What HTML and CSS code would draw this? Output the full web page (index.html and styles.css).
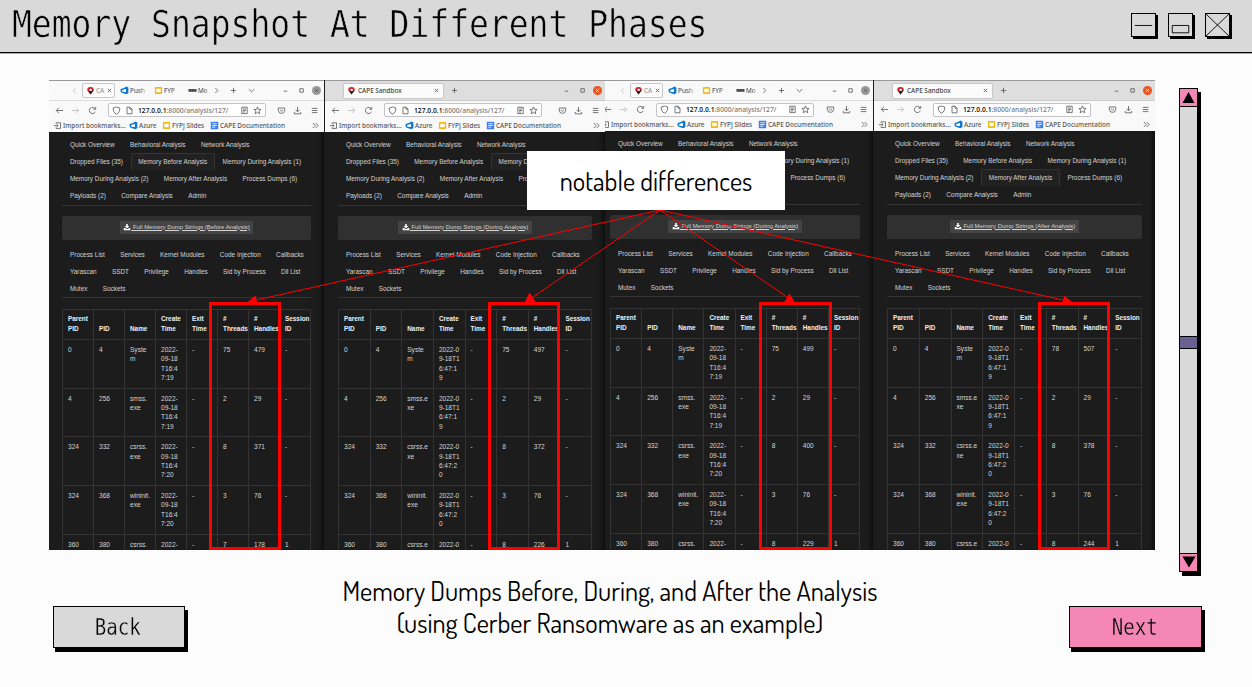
FILE: index.html
```html
<!DOCTYPE html>
<html lang="en">
<head>
<meta charset="utf-8">
<title>Memory Snapshot At Different Phases</title>
<link rel="stylesheet" href="styles.css">
</head>
<body>
<svg class="defs" aria-hidden="true">
  <symbol id="back" viewBox="0 0 9 9"><path d="M8 4.5H1.3M4 1.8L1.3 4.5L4 7.2"/></symbol>
  <symbol id="forward" viewBox="0 0 9 9"><path d="M1 4.5h6.7M5 1.8l2.7 2.7L5 7.2"/></symbol>
  <symbol id="reload" viewBox="0 0 9 9"><path d="M7.3 5.7A3.1 3.1 0 1 1 7 2.7M7.7 1v2.3H5.4"/></symbol>
  <symbol id="shield" viewBox="0 0 9 9"><path d="M4.5 1L7.8 2C7.8 5 7 7 4.5 8.2C2 7 1.2 5 1.2 2Z"/></symbol>
  <symbol id="page" viewBox="0 0 9 9"><path d="M2 1.2h3L7 3.2v4.6H2ZM5 1.2v2h2"/></symbol>
  <symbol id="reader" viewBox="0 0 9 9"><path d="M1.8 1.2h5.4v6.4H1.8ZM3 3h3M3 4.5h3M3 6h2"/></symbol>
  <symbol id="star" viewBox="0 0 9 9"><path d="M4.5 .9l1 2.4 2.6.2-2 1.7.7 2.6-2.3-1.4-2.3 1.4.7-2.6-2-1.7 2.6-.2Z"/></symbol>
  <symbol id="pocket" viewBox="0 0 9 9"><path d="M1.3 2h6.4v2.2a3.2 3.2 0 0 1-6.4 0ZM3 3.8l1.5 1.4L6 3.8"/></symbol>
  <symbol id="download" viewBox="0 0 9 9"><path d="M4.5 1v4.6M2.5 3.8l2 2 2-2M1.3 6v1.8h6.4V6"/></symbol>
  <symbol id="menu" viewBox="0 0 9 9"><path d="M1.8 2.4h5.6M1.8 4.5h5.6M1.8 6.6h5.6"/></symbol>
  <symbol id="left" viewBox="0 0 9 9"><path d="M5.8 2L3.2 4.5L5.8 7"/></symbol>
  <symbol id="right" viewBox="0 0 9 9"><path d="M3.3 2l2.5 2.5L3.3 7"/></symbol>
  <symbol id="down" viewBox="0 0 9 9"><path d="M1.8 3.2L4.5 5.8l2.7-2.6"/></symbol>
  <symbol id="plus" viewBox="0 0 9 9"><path d="M4.5 1.9v5.2M1.9 4.5h5.2"/></symbol>
  <symbol id="close" viewBox="0 0 9 9"><path d="M2.8 2.8l3.4 3.4M6.2 2.8L2.8 6.2"/></symbol>
  <symbol id="minimize" viewBox="0 0 9 9"><path d="M2.8 5.2h3.4"/></symbol>
  <symbol id="maximize" viewBox="0 0 9 9"><path d="M2.8 2.7h3.5v3.5H2.8Z"/></symbol>
  <symbol id="import" viewBox="0 0 9 9"><path d="M3 2.8V1.8h4.5v5.6H3v-1M.8 4.6h4.2M3.7 3.2L5.2 4.6L3.7 6"/></symbol>
  <symbol id="more" viewBox="0 0 9 9"><path d="M1.8 2L4.2 4.5L1.8 7M4.7 2l2.4 2.5L4.7 7"/></symbol>
  <symbol id="cape" viewBox="0 0 9 9"><path fill="#d5202b" stroke="none" d="M4.5 1A3.2 3.2 0 0 0 1.2 4.2L4.5 8.4L7.8 4.2A3.2 3.2 0 0 0 4.5 1Z"/><path fill="#222" stroke="none" d="M2.5 5.6L4.5 3.8L7.5 4.6L4.5 8.4Z"/><circle cx="4.7" cy="3.9" r="1.2" fill="#fff" stroke="none"/></symbol>
  <symbol id="azure" viewBox="0 0 9 9"><path fill="#0d78d2" stroke="none" d="M.6 3L4 1.9L6.3 .5L8.4 1.5V7L6.5 8.3L3.2 7.2L1.3 6.5L.6 5.8Z"/><path fill="#fff" stroke="none" d="M2.200 4L6 2.900V6.100L2.200 5.700Z"/></symbol>
  <symbol id="slides" viewBox="0 0 9 9"><rect x=".9" y="1" width="7.2" height="7" rx=".8" fill="#f5b912" stroke="none"/><rect x="2.3" y="2.7" width="4.4" height="3.5" fill="#fff" stroke="none"/></symbol>
  <symbol id="docs" viewBox="0 0 9 9"><rect x=".8" y=".7" width="7.4" height="7.6" rx=".6" fill="#3d7ff0" stroke="none"/><path stroke="#fff" d="M2.2 2.7h4.6M2.2 4.5h4.6M2.2 6.2h3"/></symbol>
  <symbol id="moodle" viewBox="0 0 9 9"><path stroke="none" fill="#444" d="M.5 3h8v2.8h-8Z"/><path stroke="#888" stroke-width=".5" d="M3 3v2.8M6 3v2.8"/></symbol>
  <symbol id="save" viewBox="0 0 9 9"><path fill="#fff" stroke="none" d="M3.6 1h1.8v2.5h1.8L4.5 6.2L1.8 3.5h1.8ZM.8 5.5h1.5l1.3 1.3h1.8l1.3-1.3h1.5v2.6H.8Z"/></symbol>
</svg>

<header class="titlebar">
  <h1 class="title">Memory Snapshot At Different Phases</h1>
  <div class="controls">
    <svg class="control" viewBox="0 0 25 24"><path d="M3 12.5h19"/></svg>
    <svg class="control" viewBox="0 0 25 24"><path d="M3.5 12.5h18v8h-18Z"/></svg>
    <svg class="control" viewBox="0 0 25 24"><path d="M0 0l25 24M25 0L0 24"/></svg>
  </div>
</header>

<main class="stage">
  <section class="gallery" id="gallery"></section>
  <aside class="scrollbar">
    <div class="scroll-end"><svg viewBox="0 0 17 17"><path d="M8.5 3L14.5 14h-12Z"/></svg></div>
    <div class="scroll-track"><div class="thumb"></div></div>
    <div class="scroll-end bottom"><svg viewBox="0 0 17 17"><path d="M2.5 2.5h13L9 13.5Z"/></svg></div>
  </aside>
</main>

<footer class="footer">
  <button class="nav-button"><span>Back</span></button>
  <p class="caption"><span>Memory Dumps Before, During, and After the Analysis</span><span>(using Cerber Ransomware as an example)</span></p>
  <button class="nav-button next"><span>Next</span></button>
</footer>

<svg class="annotations" viewBox="0 0 1252 687">
  <g class="boxes">
    <rect x="210.5" y="303.5" width="69" height="245"/>
    <rect x="489.5" y="303.5" width="69" height="245"/>
    <rect x="760.5" y="303.5" width="70" height="245"/>
    <rect x="1039.5" y="303.5" width="69" height="245"/>
  </g>
  <g class="arrows">
    <path d="M660 210L254 300.500M660 210L530 299M660 210L790 299M660 210L1065 300.500"/>
    <path class="heads" d="M247 302.500L255.500 295.500L258 305ZM524 304L529.500 292.500L537 304ZM796 304L789.500 293.500L783 304ZM1073 302.500L1064 295.500L1062 305Z"/>
  </g>
</svg>
<div class="callout"><span>notable differences</span></div>
<script src="app.js"></script>
</body>
</html>
```
FILE: styles.css
```css
* { box-sizing: border-box; }
body { margin: 0; width: 1252px; height: 687px; overflow: hidden; position: relative; background: #fcfcfc; color: #000; font-family: "Liberation Sans", Arial, sans-serif; }
.defs { display: none; }

.titlebar { height: 53px; display: flex; justify-content: space-between; background: #d9d9d9; border-bottom: 1px solid #000; box-shadow: 0 1px 0 #aaa; padding: 0 22px 0 12px; }
.title { margin: 0; font: 400 37px/49px "DejaVu Sans Mono", monospace; white-space: nowrap; transform: scaleX(.892); transform-origin: 0 0; -webkit-text-stroke: .6px #d9d9d9; }
.controls { display: flex; gap: 12px; padding-top: 13px; }
.control { width: 25px; height: 24px; border: 1px solid #000; box-shadow: 2px 2px 0 #000; overflow: hidden; fill: none; stroke: #000; }

.stage { display: flex; height: 523px; padding: 27px 0 0 49px; }
.gallery { display: flex; width: 1106px; height: 470px; overflow: hidden; background: #1c1c1c; }
.scrollbar { width: 19px; height: 484px; margin: 8px 0 0 24px; display: flex; flex-direction: column; border: 1px solid #000; background: #d9d9d9; box-shadow: 3px 4px 0 #000; }
.scroll-end { height: 18px; flex: none; background: #f487b6; border-bottom: 1px solid #000; }
.scroll-end.bottom { border-bottom: 0; border-top: 1px solid #000; }
.scroll-end svg { width: 17px; height: 17px; display: block; }
.scroll-track { flex: 1; padding-top: 229px; }
.thumb { height: 13px; background: #6c6092; border: 1px solid #000; border-width: 1px 0; }

.footer { display: flex; height: 111px; padding: 0 49px 0 53px; }
.nav-button { flex: none; width: 132px; height: 42px; margin-top: 30px; padding: 0 2px 0 0; border: 1px solid #000; border-radius: 0; background: #d9d9d9; box-shadow: 2px 4px 0 #000, 3px 4px 0 #000; color: #000; font: 400 23px/41px "DejaVu Sans Mono", monospace; }
.nav-button span { display: inline-block; transform: scaleX(.83); -webkit-text-stroke: .35px #d9d9d9; }
.nav-button.next { width: 133px; background: #f487b6; }
.nav-button.next span { -webkit-text-stroke-color: #f487b6; }
.caption { flex: none; margin: -1px 184px 0 150px; text-align: center; font: 400 26.450px/32px Dosis, "Open Sans", sans-serif; white-space: nowrap; display: flex; flex-direction: column; align-items: center; width: 550px; }

.annotations { position: absolute; inset: 0; width: 1252px; height: 687px; }
.boxes rect { fill: none; stroke: #f00; stroke-width: 3; }
.arrows path { fill: none; stroke: #f00; stroke-width: 1; }
.arrows .heads { fill: #f00; stroke: none; }
.callout { position: absolute; left: 527px; top: 151px; width: 258px; height: 59px; background: #fff; display: flex; justify-content: center; font: 400 26.450px/60px Dosis, "Open Sans", sans-serif; white-space: nowrap; }

/* Browser windows */
.shot { flex: none; height: 470px; overflow: hidden; }
.window { height: 470px; border-top: 1px solid #999; }
.icon { width: 9px; height: 9px; flex: none; fill: none; stroke: #555; stroke-width: .8; display: block; }
.icon.dim { stroke: #bbb; }
.chrome { font: 500 6.400px/9px "Noto Sans", sans-serif; color: #555; white-space: nowrap; background: #f9f9fa; }
.tabs { height: 20px; display: flex; align-items: center; border-bottom: 1px solid #ddd; padding-right: 3px; }
.focused .tabs { background: #dedede; border-color: #ccc; }
.tab { display: flex; align-items: center; height: 16px; border: 1px solid #c8c8cc; border-radius: 2px; background: #fbfbfb; }
.tab.small { width: 33px; height: 15px; margin-left: 3px; padding-left: 3px; }
.tab.wide { width: 101px; margin-left: 18px; padding: 0 2px 0 3px; }
.tab-title { margin-left: 1px; width: 10px; color: #999; }
.wide .tab-title { margin-left: 2px; width: auto; flex: 1; color: #444; }
.new-tab { margin-left: 6px; }
.mini { display: flex; align-items: center; }
.mini span { margin-left: 1px; -webkit-mask-image: linear-gradient(90deg, #000 55%, #0005); }
.window-controls { display: flex; gap: 6.500px; margin-left: auto; }
.window-close { border-radius: 50%; background: #999; }
.focused .window-close { background: #e95420; stroke: #fff; }
.toolbar { height: 20px; display: flex; align-items: center; gap: 7.500px; padding: 0 5.500px 2px; }
.address { width: 158px; height: 14px; margin-left: 4px; padding: 0 3px; display: flex; align-items: center; gap: 4px; border: 1px solid #c4c4c8; border-radius: 2px; background: #fff; font-size: 6.700px; color: #777; }
.address b { font-weight: 600; color: #222; }
.address .reader { margin-left: auto; }
.toolbar .pocket { margin-left: auto; }
.bookmarks { height: 11px; display: flex; align-items: center; padding: 0 4px 3px; }
.bookmarks .more { margin-left: auto; }
.bookmarks span { margin-left: 1px; }
.unfocused .tabs { padding-left: 21px; }
.raised .toolbar { height: 19px; }

.content { background: #1c1c1c; color: #d4d4d4; font-size: 6.550px; padding: 4px 13px 0; height: 420px; box-shadow: inset -5px 0 5px -3px #0009; }
.links { border-bottom: 1px solid #343434; font-size: 6.400px; }
.links.main { height: 69.500px; }
.links.sub { height: 52px; margin-top: 6px; }
.row { display: flex; height: 17px; line-height: 18px; white-space: nowrap; padding-left: .3px; }
.row span { padding: 0 7.700px; }
.row .active { background: #212121; border: 1px solid #333; border-bottom: 0; padding: 0 6.700px; line-height: 16px; border-radius: 2px 2px 0 0; }
.well { height: 24px; margin-top: 10px; display: flex; align-items: center; justify-content: center; background: #303030; border-radius: 2px; }
.dump { display: flex; align-items: center; height: 13px; padding: 0 3.500px; background: #444; border-radius: 1px; font-size: 5.950px; line-height: 7px; padding-bottom: 1px; text-decoration: underline; white-space: pre; }
.dump .icon { width: 8px; height: 8px; }
.processes { width: 100%; height: 270px; margin-top: 11px; table-layout: fixed; border-collapse: collapse; line-height: 9.350px; text-align: left; }
.processes th, .processes td { border: 1px solid #333; padding: 5px 0 0 5px; vertical-align: top; white-space: nowrap; }
.processes th { height: 30.500px; padding: 0 0 6px 5px; vertical-align: bottom; color: #f0f0f0; font-size: 6.400px; }
.processes td { height: 48.700px; }
```
FILE: app.js
```js
const icon = (name, extra = "") => `<svg class="icon ${extra}"><use href="#${name}"/></svg>`;

const shots = [
  { width: 276, inner: 275, offset: 0, focused: false, raised: false, phase: "Before", active: "Memory Before Analysis", threads: [75, 2, 8, 3, 7], handles: [479, 29, 371, 76, 178] },
  { width: 280, inner: 280, offset: 0, focused: true, raised: false, phase: "During", active: "Memory During Analysis (1)", threads: [75, 2, 8, 3, 8], handles: [497, 29, 372, 76, 226] },
  { width: 269, inner: 276, offset: -8, focused: false, raised: true, phase: "During", active: "Memory During Analysis (2)", threads: [75, 2, 8, 3, 8], handles: [499, 29, 400, 76, 229] },
  { width: 281, inner: 281, offset: 0, focused: true, raised: true, phase: "After", active: "Memory After Analysis", threads: [78, 2, 8, 3, 8], handles: [507, 29, 378, 76, 244] }
];

const mainLinks = [
  ["Quick Overview", "Behavioral Analysis", "Network Analysis"],
  ["Dropped Files (35)", "Memory Before Analysis", "Memory During Analysis (1)"],
  ["Memory During Analysis (2)", "Memory After Analysis", "Process Dumps (6)"],
  ["Payloads (2)", "Compare Analysis", "Admin"]
];
const subLinks = [
  ["Process List", "Services", "Kernel Modules", "Code Injection", "Callbacks"],
  ["Yarascan", "SSDT", "Privilege", "Handles", "Sid by Process", "Dll List"],
  ["Mutex", "Sockets"]
];
const headings = ["Parent<br>PID", "PID", "Name", "Create<br>Time", "Exit<br>Time", "#<br>Threads", "#<br>Handles", "Session<br>ID"];
const narrow = [["0", "4", "Syste<br>m", "19"], ["4", "256", "smss.<br>exe", "19"], ["324", "332", "csrss.<br>exe", "20"], ["324", "368", "wininit.<br>exe", "20"], ["360", "380", "csrss.", ""]];
const wide = [["0", "4", "Syste<br>m", "19"], ["4", "256", "smss.e<br>xe", "19"], ["324", "332", "csrss.e<br>xe", "20"], ["324", "368", "wininit.<br>exe", "20"], ["360", "380", "csrss.e", ""]];

const linkRows = (rows, active) => rows.map(row =>
  `<div class="row">${row.map(t => `<span class="${t === active ? "active" : ""}">${t}</span>`).join("")}</div>`).join("");

function created(seconds, isWide) {
  if (!seconds) return isWide ? "2022-0" : "2022-";
  return isWide ? `2022-0<br>9-18T1<br>6:47:${seconds[0]}<br>${seconds[1]}` : `2022-<br>09-18<br>T16:4<br>7:${seconds}`;
}

const mini = (name, text, width, textWidth) => `<div class="mini" style="width:${width}px">${icon(name)}<span style="width:${textWidth}px">${text}</span></div>`;

function tabs(s) {
  const controls = `<div class="window-controls">${icon("minimize")}${icon("maximize")}${icon("close", "window-close")}</div>`;
  if (s.focused) return `<div class="tabs"><div class="tab wide">${icon("cape")}<span class="tab-title">CAPE Sandbox</span>${icon("close")}</div>${icon("plus", "new-tab")}${controls}</div>`;
  return `<div class="tabs">${icon("left", "dim")}<div class="tab small">${icon("cape")}<span class="tab-title">CA</span>${icon("close")}</div><div style="width:5px"></div>${mini("azure", "Push", 34, 16)}${mini("slides", "FYP", 34, 14)}${mini("moodle", "Mo", 24, 11)}${icon("right")}<div style="width:8px"></div>${icon("plus")}<div style="width:9px"></div>${icon("down")}${controls}</div>`;
}

function render(s) {
  const rows = (s.focused ? wide : narrow).map((r, i) =>
    `<tr><td>${r[0]}</td><td>${r[1]}</td><td>${r[2]}</td><td>${created(r[3], s.focused)}</td><td>-</td><td>${s.threads[i]}</td><td>${s.handles[i]}</td><td>${i === 4 ? "1" : "-"}</td></tr>`).join("");
  return `<article class="shot ${s.focused ? "focused" : "unfocused"} ${s.raised ? "raised" : ""}" style="width:${s.width}px">
    <div class="window" style="width:${s.inner}px;margin-left:${s.offset}px">
      <div class="chrome">
        ${tabs(s)}
        <div class="toolbar">${icon("back")}${icon("forward", "dim")}${icon("reload")}
          <div class="address">${icon("shield")}${icon("page")}<span><b>127.0.0.1</b>:8000/analysis/127/</span>${icon("reader", "reader")}${icon("star")}</div>
          ${icon("pocket", "pocket")}${icon("download")}${icon("menu")}</div>
        <div class="bookmarks">${icon("import")}<span style="width:66px">Import bookmarks...</span>${icon("azure")}<span style="width:23px">Azure</span>${icon("slides")}<span style="width:38px">FYPJ Slides</span>${icon("docs")}<span>CAPE Documentation</span>${icon("more", "more")}</div>
      </div>
      <div class="content">
        <nav class="links main">${linkRows(mainLinks, s.active)}</nav>
        <div class="well"><a class="dump">${icon("save")} Full Memory Dump Strings (${s.phase} Analysis)</a></div>
        <nav class="links sub">${linkRows(subLinks)}</nav>
        <table class="processes"><thead><tr>${headings.map(h => `<th>${h}</th>`).join("")}</tr></thead><tbody>${rows}</tbody></table>
      </div>
    </div>
  </article>`;
}

document.getElementById("gallery").innerHTML = shots.map(render).join("");
```
